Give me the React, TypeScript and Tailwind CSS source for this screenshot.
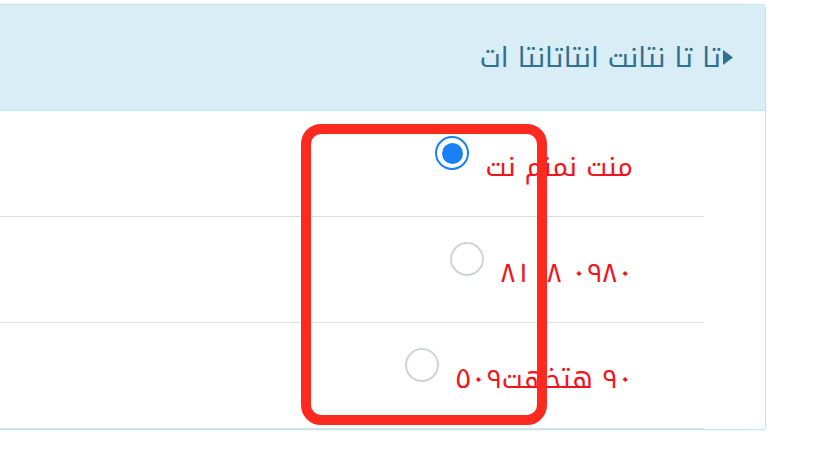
import React from "react";

function Radio({ checked }: { checked?: boolean }) {
  if (checked) {
    return (
      <span className="flex h-[34px] w-[34px] shrink-0 items-center justify-center rounded-full border-[2.5px] border-[#1b7ff6] bg-white">
        <span className="h-[21px] w-[21px] rounded-full bg-[#1b7ff6]" />
      </span>
    );
  }
  return <span className="block h-[34px] w-[34px] shrink-0 rounded-full border-2 border-[#d0d4da] bg-white" />;
}

function Row({ text, checked }: { text: string; checked?: boolean }) {
  return (
    <div className="flex h-[106px] flex-row items-start justify-start gap-[16px] border-b border-[#dddddd] pr-[71px] pt-[25px]" dir="rtl">
      <span className="mt-[9px] [font-family:Noto_Kufi_Arabic,sans-serif] text-[27px] leading-[44px] text-[#f0141e]">{text}</span>
      <Radio checked={checked} />
    </div>
  );
}

export default function App() {
  return (
    <div className="relative h-[458px] w-[815px] overflow-hidden bg-white [font-family:Noto_Kufi_Arabic,sans-serif]">
      <div className="mt-[4px] w-[766px] rounded-r-[4px] border border-l-0 border-[#bce8f1] bg-white shadow-[0_1px_1px_rgba(0,0,0,0.05)]">
        <div className="flex h-[106px] items-center justify-end rounded-tr-[3px] border-b border-[#bce8f1] bg-[#d9edf7] pr-[32px]" dir="ltr">
          <span className="[font-family:Noto_Kufi_Arabic,sans-serif] text-[27px] leading-[44px] text-[#31708f]" dir="rtl">تا تا نتانت انتاتانتا ات</span>
          <svg width="10" height="15" viewBox="0 0 10 15" className="ml-[2px]">
            <path d="M0 0 L10 7.5 L0 15 Z" fill="#31708f" />
          </svg>
        </div>
        <div className="mr-[61px]">
          <Row text="منت نمنم نت" checked />
          <Row text="٠٩٨٠ ٨١١٨" />
          <Row text="٩٠ هتخهت٥٠٩" />
        </div>
      </div>
      <div className="absolute left-[301px] top-[124px] h-[301px] w-[246px] rounded-[20px] border-[10px] border-[#fd2b1f]" />
    </div>
  );
}
